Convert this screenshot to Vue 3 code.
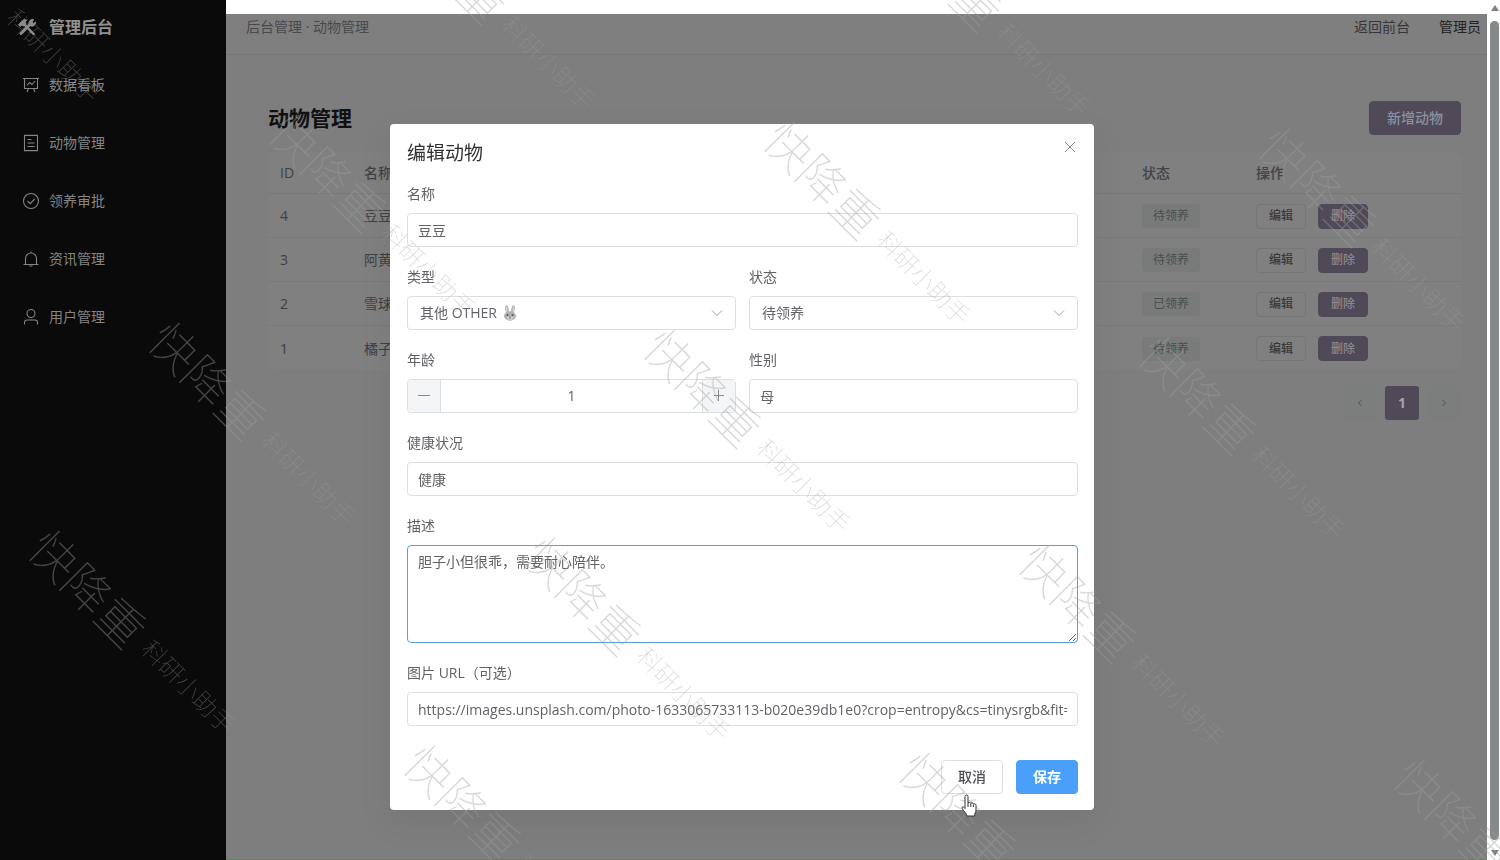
<script setup>
import { ref } from 'vue'

const nav = [
  { icon: 'board', label: '数据看板' },
  { icon: 'ticket', label: '动物管理' },
  { icon: 'check', label: '领养审批' },
  { icon: 'bell', label: '资讯管理' },
  { icon: 'user', label: '用户管理' }
]
const animals = [
  { id: 4, name: '豆豆', status: '待领养' },
  { id: 3, name: '阿黄', status: '待领养' },
  { id: 2, name: '雪球', status: '已领养' },
  { id: 1, name: '橘子', status: '待领养' }
]
const form = ref({
  name: '豆豆',
  type: 'OTHER',
  status: '待领养',
  age: 1,
  gender: '母',
  health: '健康',
  desc: '胆子小但很乖，需要耐心陪伴。',
  url: 'https://images.unsplash.com/photo-1633065733113-b020e39db1e0?crop=entropy&cs=tinysrgb&fit='
})
const marks = [
  [-83, -75], [412, -68], [907, -61],
  [292, 140], [787, 147], [1282, 154],
  [172, 348], [667, 355], [1162, 362],
  [52, 556], [547, 563], [1042, 570],
  [427, 771], [922, 778], [1417, 785]
]
</script>

<template>
  <div class="page">
    <aside class="side">
      <div class="brand">
        <svg width="20" height="20" viewBox="0 0 20 20" fill="none" stroke="#8b8b8b" aria-hidden="true">
          <path d="M4 16.500 13 7.500" stroke-width="3" stroke-linecap="round" />
          <path d="M12.500 7.500a3.500 3.500 0 0 1 4-5l-1.500 2.500 1.500 1.500 2-1.500a3.500 3.500 0 0 1-4.500 4z" fill="#8b8b8b" />
          <path d="M7 7l9.500 10" stroke-width="2.500" stroke-linecap="round" />
          <path d="M1.500 7.500 7.500 2l2 1.500L8 5l1 2-2 2-2-1-2 1.500z" fill="#8b8b8b" />
        </svg>
        <span>管理后台</span>
      </div>
      <nav>
        <a v-for="n in nav" :key="n.label" href="#" class="nav-item">
          <svg width="18" height="18" viewBox="0 0 18 18" fill="none" stroke="currentColor" stroke-width="1.100" aria-hidden="true">
            <g v-if="n.icon === 'board'">
              <path d="M1 2.500h16M2.500 2.500v10h13v-10M5 9.500l2.500-3 2.500 2 3-3.500M6.500 12.500 5 16M11.500 12.500 13 16" />
            </g>
            <g v-else-if="n.icon === 'ticket'">
              <path d="M2.500 1.500h13v15h-13zM5.500 5.500h4M5.500 9h7M5.500 12.500h7" />
              <path d="M2.500 1h13M2.500 17h13" stroke-dasharray="1 1" />
            </g>
            <g v-else-if="n.icon === 'check'">
              <circle cx="9" cy="9" r="7.500" /><path d="m5.500 9 2.700 2.700 4.500-4.700" />
            </g>
            <g v-else-if="n.icon === 'bell'">
              <path d="M1.500 14.500h15M3.500 14.500V8.500a5.500 5.500 0 0 1 11 0v6M9 3V1.500M7.500 16h3" />
            </g>
            <g v-else>
              <circle cx="9" cy="5.500" r="4" /><path d="M2.500 16.500v-2a2.500 2.500 0 0 1 2.500-2.500h8a2.500 2.500 0 0 1 2.500 2.500v2" />
            </g>
          </svg>
          <span>{{ n.label }}</span>
        </a>
      </nav>
    </aside>

    <div class="body">
      <header class="top">
        <span class="crumb">后台管理 · 动物管理</span>
        <a href="#" class="back">返回前台</a>
        <span class="admin">管理员</span>
      </header>
      <main class="main">
        <div class="head">
          <h1>动物管理</h1>
          <button class="btn add">新增动物</button>
        </div>
        <table>
          <thead>
            <tr><th class="c-id">ID</th><th>名称</th><th class="c-st">状态</th><th class="c-op">操作</th></tr>
          </thead>
          <tbody>
            <tr v-for="a in animals" :key="a.id">
              <td>{{ a.id }}</td>
              <td>{{ a.name }}</td>
              <td><span class="tag">{{ a.status }}</span></td>
              <td>
                <div class="ops">
                  <button class="btn sm">编辑</button>
                  <button class="btn sm dark">删除</button>
                </div>
              </td>
            </tr>
          </tbody>
        </table>
        <div class="pager">
          <button class="pg" aria-label="上一页">
            <svg width="10" height="10" viewBox="0 0 10 10" fill="none" stroke="currentColor"><path d="M6.500 2 3.500 5l3 3" /></svg>
          </button>
          <button class="pg on">1</button>
          <button class="pg" aria-label="下一页">
            <svg width="10" height="10" viewBox="0 0 10 10" fill="none" stroke="currentColor"><path d="m3.500 2 3 3-3 3" /></svg>
          </button>
        </div>
      </main>
      <div class="edge"></div>
    </div>

    <div class="scroll" aria-hidden="true">
      <svg width="8" height="6" viewBox="0 0 8 6"><path d="M4 0 8 6H0z" fill="#7d8080" /></svg>
      <div class="thumb"></div>
      <svg width="8" height="6" viewBox="0 0 8 6"><path d="M0 0h8L4 6z" fill="#7d8080" /></svg>
    </div>

    <div class="overlay">
      <form class="dialog" role="dialog" aria-labelledby="dlg-title" @submit.prevent>
        <div class="dlg-head">
          <h2 id="dlg-title">编辑动物</h2>
          <button type="button" class="close" aria-label="关闭">
            <svg width="12" height="12" viewBox="0 0 12 12" fill="none" stroke="#8b8e92"><path d="m1 1 10 10M11 1 1 11" /></svg>
          </button>
        </div>
        <div class="grid">
          <div class="field wide">
            <label for="f-name">名称</label>
            <input id="f-name" v-model="form.name" class="ctl" type="text" />
          </div>
          <div class="field">
            <label for="f-type">类型</label>
            <div class="sel">
              <select id="f-type" v-model="form.type" class="ctl"><option value="OTHER">其他 OTHER</option></select>
              <svg class="rabbit" width="14" height="16" viewBox="0 0 14 16" aria-hidden="true">
                <ellipse cx="4" cy="4.500" rx="1.700" ry="4.300" fill="#b0b3b3" transform="rotate(-10 4 4.500)" />
                <ellipse cx="10" cy="4.500" rx="1.700" ry="4.300" fill="#b0b3b3" transform="rotate(10 10 4.500)" />
                <path d="M3.700 2v5M10.300 2v5" stroke="#dcdcde" />
                <ellipse cx="7" cy="11" rx="6" ry="4.700" fill="#b0b3b3" />
                <ellipse cx="7" cy="13" rx="3" ry="2" fill="#d0d0d2" />
                <circle cx="4.500" cy="10" r="1" fill="#555" /><circle cx="9.500" cy="10" r="1" fill="#555" />
                <path d="M6 11.500h2l-1 1z" fill="#666" /><path d="M7 12v2" stroke="#777" />
              </svg>
              <svg class="chev" width="12" height="12" viewBox="0 0 12 12" fill="none" stroke="#9b9fa5" aria-hidden="true"><path d="m1 3.500 5 5 5-5" /></svg>
            </div>
          </div>
          <div class="field">
            <label for="f-status">状态</label>
            <div class="sel">
              <select id="f-status" v-model="form.status" class="ctl"><option>待领养</option></select>
              <svg class="chev" width="12" height="12" viewBox="0 0 12 12" fill="none" stroke="#9b9fa5" aria-hidden="true"><path d="m1 3.500 5 5 5-5" /></svg>
            </div>
          </div>
          <div class="field">
            <label for="f-age">年龄</label>
            <div class="num">
              <button type="button" aria-label="减少" @click="form.age--">
                <svg width="12" height="12" viewBox="0 0 12 12" stroke="#85888c"><path d="M0 5.500h12" /></svg>
              </button>
              <input id="f-age" v-model="form.age" type="text" inputmode="numeric" />
              <button type="button" aria-label="增加" @click="form.age++">
                <svg width="12" height="12" viewBox="0 0 12 12" stroke="#85888c"><path d="M1 5.500h10M5.500 0v11" /></svg>
              </button>
            </div>
          </div>
          <div class="field">
            <label for="f-gender">性别</label>
            <input id="f-gender" v-model="form.gender" class="ctl" type="text" />
          </div>
          <div class="field wide">
            <label for="f-health">健康状况</label>
            <input id="f-health" v-model="form.health" class="ctl" type="text" />
          </div>
          <div class="field wide">
            <label for="f-desc">描述</label>
            <textarea id="f-desc" v-model="form.desc" class="ctl area"></textarea>
          </div>
          <div class="field wide">
            <label for="f-url">图片 URL（可选）</label>
            <input id="f-url" v-model="form.url" class="ctl" type="text" />
          </div>
        </div>
        <div class="foot">
          <button type="button" class="act">取消</button>
          <button type="submit" class="act save">保存</button>
        </div>
      </form>
    </div>

    <svg class="marks" aria-hidden="true">
      <g v-for="(m, i) in marks" :key="i" :transform="`translate(${m[0]} ${m[1]}) rotate(45)`">
        <text x="-22" y="16" font-size="47">快降重</text>
        <text x="129" y="5" font-size="24">科研小助手</text>
      </g>
    </svg>
    <svg class="cursor" width="18" height="24" viewBox="0 0 18 24" aria-hidden="true">
      <path d="M5 14.500V2.500a1.500 1.500 0 0 1 3 0V9c.5-1 2.500-1 2.800.3.700-.9 2.400-.5 2.600.7 1-.7 2.600-.1 2.600 1.300V16c0 2-1.500 3.500-1.500 6H7c-.5-2.500-3-4.500-4.700-7.500-.8-1.700 1-2.800 2.700 0z" fill="#fff" stroke="#333" />
      <path d="M8 9v4M10.800 9.500V13M13.400 10.500V13" stroke="#333" />
    </svg>
  </div>
</template>

<style>
body {
  background: #7e7e7e;
}
</style>

<style scoped>
* {
  box-sizing: border-box;
}
.page {
  display: flex;
  min-height: 100vh;
  font-family: "Open Sans", "Noto Sans CJK SC", sans-serif;
  font-size: 14px;
  line-height: 22px;
  color: #3f3f42;
}
button, input, select, textarea {
  font: inherit;
  color: inherit;
  margin: 0;
}
a {
  color: inherit;
  text-decoration: none;
}
.side {
  width: 226px;
  flex: none;
  background: #0a0a0a;
  color: #858585;
}
.brand {
  display: flex;
  align-items: center;
  gap: 12px;
  height: 56px;
  padding: 0 17px 2px;
  font-size: 16px;
  font-weight: 700;
  color: #919191;
}
.nav-item {
  display: flex;
  align-items: center;
  gap: 9px;
  height: 58px;
  padding: 0 22px;
}
.body {
  flex: 1;
  min-width: 0;
  display: flex;
  flex-direction: column;
  background: #7e7e7e;
}
.top {
  display: flex;
  height: 55px;
  padding: 0 6px 0 20px;
  border-top: 14px solid #fff;
  border-bottom: 1px solid #777;
  line-height: 26px;
  background: #7f7f7f;
}
.crumb {
  flex: 1;
  color: #49494c;
}
.back {
  margin-right: 29px;
  color: #363638;
}
.admin {
  color: #222224;
}
.main {
  flex: 1;
  padding: 46px 26px 0 42px;
}
.head {
  display: flex;
  align-items: center;
  justify-content: space-between;
  height: 34px;
  margin-bottom: 17px;
}
h1 {
  margin: 0;
  font-size: 21px;
  font-weight: 700;
  color: #101011;
}
.btn {
  border: 1px solid #504957;
  border-radius: 4px;
  padding: 0;
  cursor: pointer;
}
.add {
  width: 92px;
  height: 34px;
  background: #504957;
  color: #8793a3;
  font-weight: 500;
}
table {
  width: 100%;
  table-layout: fixed;
  border-collapse: separate;
  border-spacing: 0;
  background: #808080;
  border-radius: 8px;
}
th {
  height: 42px;
  padding: 0 12px;
  text-align: left;
  font-weight: 500;
  border-bottom: 1px solid #787878;
  color: #434346;
}
td {
  height: 44px;
  padding: 1px 12px 0;
  border-bottom: 1px solid #797979;
}
tbody tr:last-child td {
  border-bottom: 0;
}
.c-id {
  width: 84px;
}
.c-st {
  width: 114px;
}
.c-op {
  width: 217px;
}
.tag {
  display: inline-block;
  height: 24px;
  padding: 0 11px;
  border-radius: 4px;
  background: #797b7b;
  color: #4a4d4d;
  font-size: 12px;
  line-height: 24px;
}
.ops {
  display: flex;
  gap: 12px;
}
.sm {
  width: 50px;
  height: 25px;
  border-color: #767676;
  background: #808080;
  color: #38383a;
  font-size: 12px;
  font-weight: 500;
}
.dark {
  border-color: #504957;
  background: #504957;
  color: #8b878f;
}
.pager {
  display: flex;
  justify-content: flex-end;
  gap: 8px;
  margin-top: 16px;
}
.pg {
  display: flex;
  align-items: center;
  justify-content: center;
  width: 34px;
  height: 34px;
  padding: 0;
  border: 0;
  border-radius: 3px;
  background: #7c7d7d;
  color: #505053;
}
.on {
  background: #504957;
  color: #a4a4a6;
  font-weight: 700;
}
.edge {
  height: 1px;
  background: #5f8260;
}
.scroll {
  width: 13px;
  flex: none;
  display: flex;
  flex-direction: column;
  align-items: center;
  gap: 10px;
  padding: 5px 0 4px 2px;
  background: #fff;
}
.thumb {
  flex: 1;
  width: 9px;
  border-radius: 5px;
  background: #868989;
}
.overlay {
  position: fixed;
  inset: 0;
  display: flex;
  justify-content: center;
  align-items: flex-start;
  padding: 124px 16px 0 0;
}
.dialog {
  width: 704px;
  padding: 16px 16px 16px 17px;
  border-radius: 4px;
  background: #fff;
  color: #606266;
  box-shadow: 0 12px 32px 4px rgba(0, 0, 0, 0.06);
}
.dlg-head {
  display: flex;
  justify-content: space-between;
  height: 26px;
  margin-bottom: 17px;
}
h2 {
  margin: 0;
  font-size: 19px;
  font-weight: 400;
  line-height: 26px;
  color: #303133;
}
.close {
  display: flex;
  width: 16px;
  height: 14px;
  padding: 1px 2px;
  border: 0;
  background: none;
}
.grid {
  display: grid;
  grid-template-columns: 1fr 1fr;
  gap: 19px 13px;
}
.field {
  display: flex;
  flex-direction: column;
  gap: 8px;
  min-width: 0;
}
.wide {
  grid-column: 1 / -1;
}
.ctl {
  width: 100%;
  height: 34px;
  padding: 0 10px;
  border: 1px solid #dcdfe2;
  border-radius: 4px;
  background: #fff;
  outline: 0;
}
.area {
  display: block;
  height: 98px;
  padding: 5px 10px;
  border-color: #5a9fdc;
  resize: vertical;
}
.sel {
  position: relative;
}
.sel .ctl {
  display: block;
  padding: 0 12px;
  appearance: none;
}
.chev {
  position: absolute;
  right: 13px;
  top: 11px;
}
.rabbit {
  position: absolute;
  left: 96px;
  top: 9px;
}
.num {
  display: flex;
  height: 34px;
  border: 1px solid #dcdfe2;
  border-radius: 4px;
  overflow: hidden;
}
.num input {
  flex: 1;
  min-width: 0;
  padding: 0;
  border: 0;
  text-align: center;
}
.num button {
  display: flex;
  align-items: center;
  justify-content: center;
  width: 33px;
  padding: 0;
  border: 0;
  background: #f4f5f6;
}
.num button:first-child {
  border-right: 1px solid #dcdfe2;
}
.num button:last-child {
  border-left: 1px solid #dcdfe2;
}
.foot {
  display: flex;
  justify-content: flex-end;
  gap: 13px;
  margin-top: 34px;
}
.act {
  width: 62px;
  height: 34px;
  padding: 0;
  border: 1px solid #dcdfe2;
  border-radius: 4px;
  background: #fff;
  color: #4d4f53;
  font-weight: 500;
}
.save {
  border-color: #4a9ffb;
  background: #4a9ffb;
  color: #fff;
  font-weight: 700;
}
.marks {
  position: fixed;
  inset: 0;
  width: 100%;
  height: 100%;
  pointer-events: none;
  font-family: "Noto Sans CJK SC", sans-serif;
  font-weight: 100;
  fill: rgba(156, 160, 160, 0.4);
}
.cursor {
  position: fixed;
  left: 960px;
  top: 794px;
  pointer-events: none;
}
</style>
